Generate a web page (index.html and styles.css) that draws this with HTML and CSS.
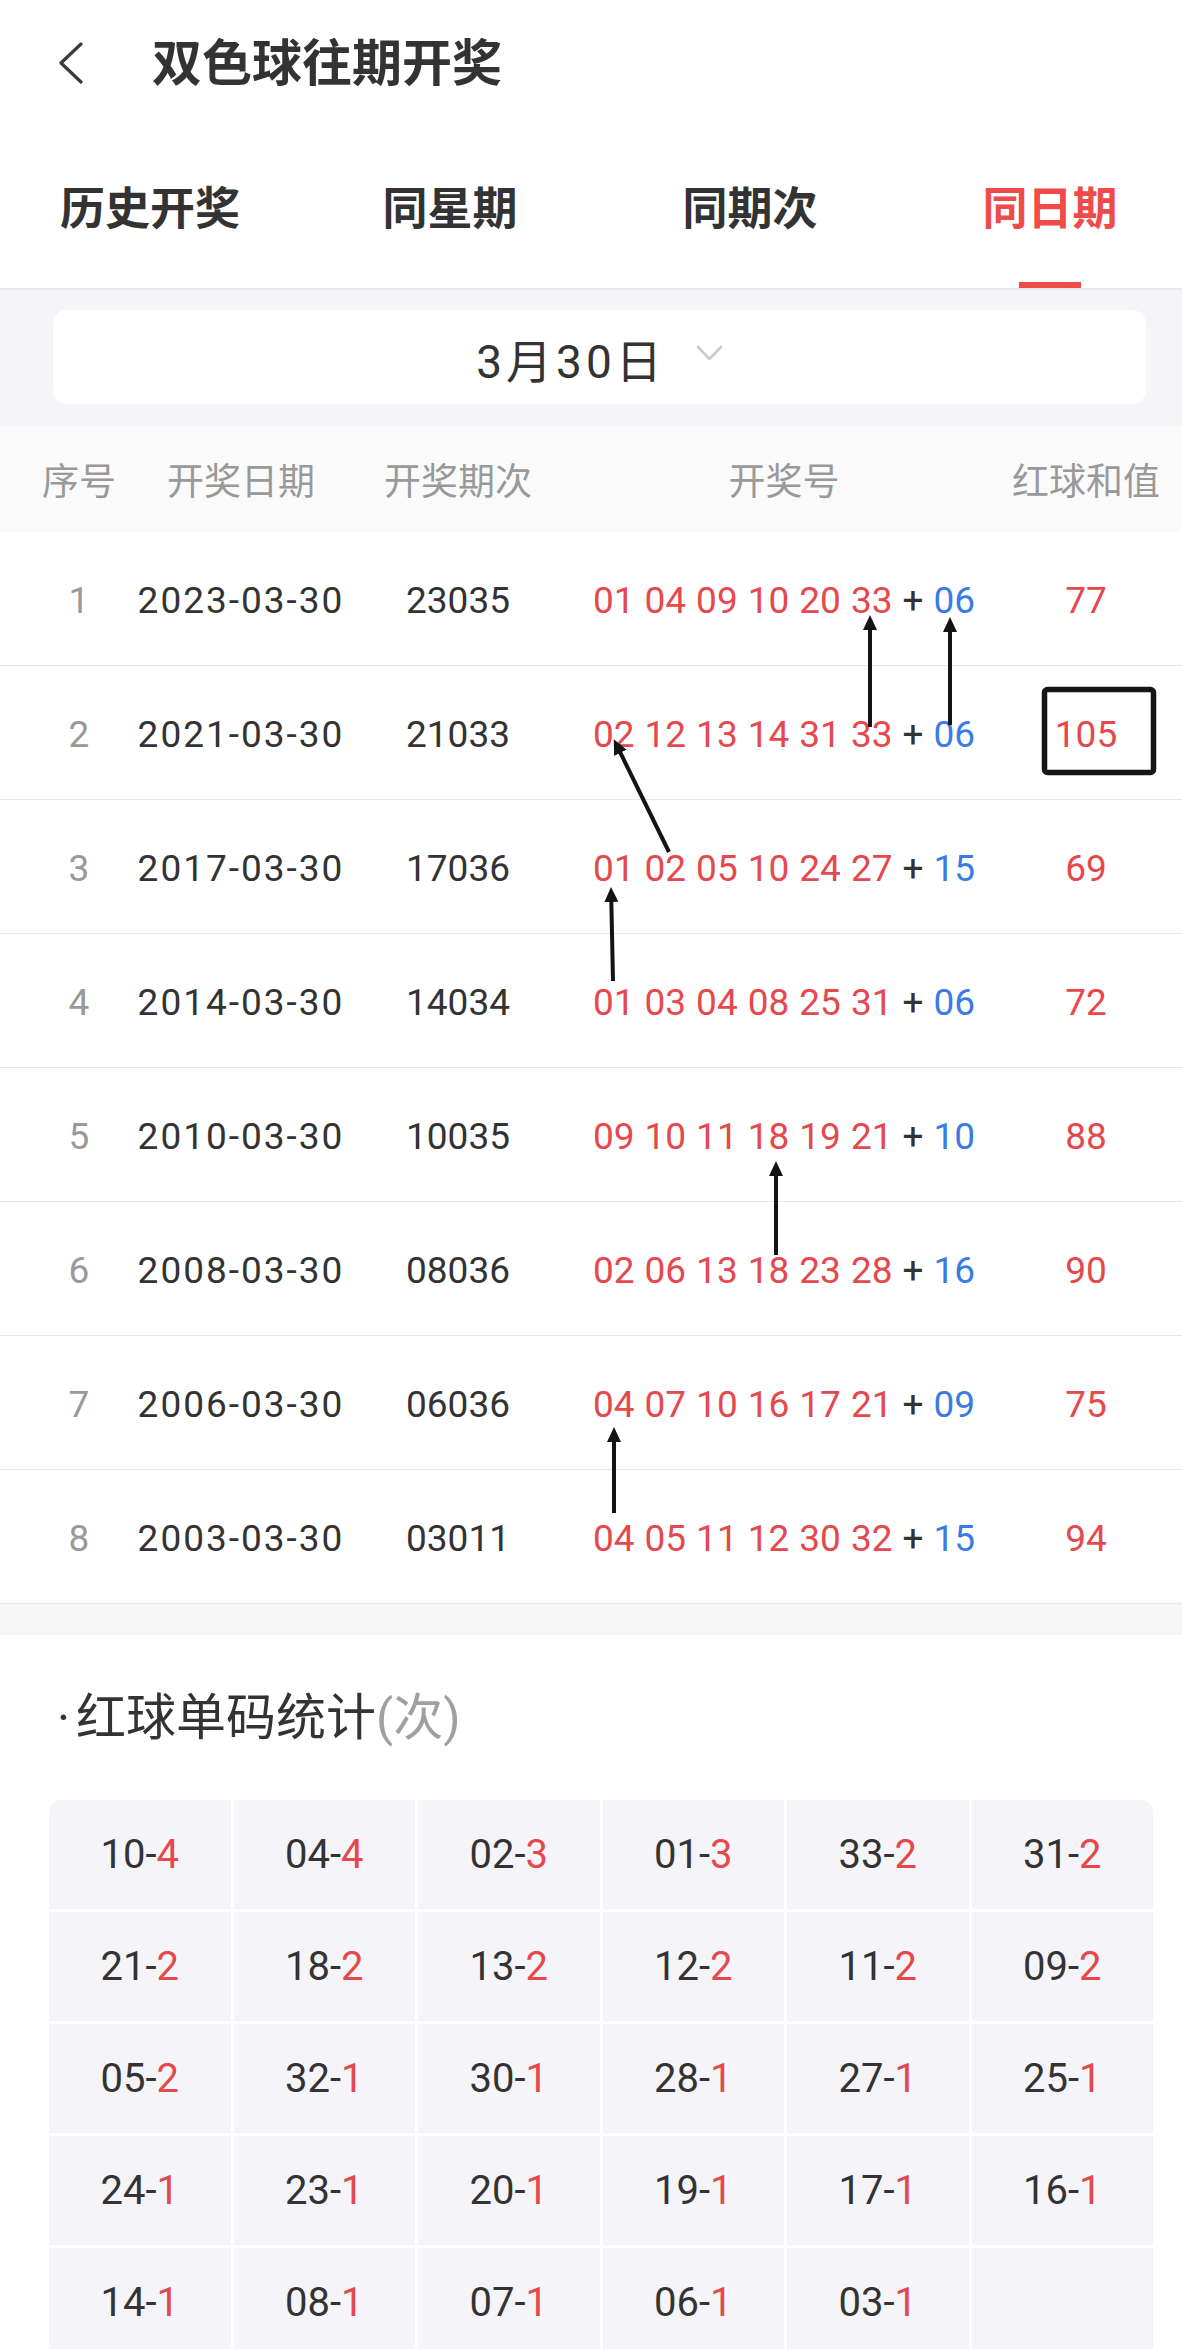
FILE: index.html
```
<!DOCTYPE html>
<html lang="zh-CN">
<head>
    <meta charset="UTF-8">
    <title>双色球往期开奖</title>
    <link rel="stylesheet" href="styles.css">
</head>
<body>
<div class="page">
    <div class="topbar">
        <svg class="back" width="26" height="42" viewBox="0 0 26 42">
            <polyline points="23,2 3,21 23,40" fill="none" stroke="#3a3a3a" stroke-width="3.2" stroke-linecap="round" stroke-linejoin="round"/>
        </svg>
        <h1 class="title">双色球往期开奖</h1>
    </div>

    <div class="tabs">
        <div class="tab">历史开奖</div>
        <div class="tab">同星期</div>
        <div class="tab">同期次</div>
        <div class="tab active">同日期</div>
    </div>

    <div class="picker-wrap">
        <div class="picker">
            <span class="picker-text">3月30日</span>
            <svg class="picker-arrow" width="27" height="17" viewBox="0 0 27 17">
                <polyline points="2,2 13.5,14 25,2" fill="none" stroke="#cacaca" stroke-width="2.6" stroke-linecap="round" stroke-linejoin="round"/>
            </svg>
        </div>
    </div>

    <div class="table">
        <div class="thead">
            <div class="c1">序号</div>
            <div class="c2">开奖日期</div>
            <div class="c3">开奖期次</div>
            <div class="c4">开奖号</div>
            <div class="c5">红球和值</div>
        </div>
        <div class="row">
            <div class="c1 idx">1</div>
            <div class="c2 date">2023-03-30</div>
            <div class="c3">23035</div>
            <div class="c4 balls"><span>01</span><span>04</span><span>09</span><span>10</span><span>20</span><span>33</span><i>+</i><b>06</b></div>
            <div class="c5 sum">77</div>
        </div>
        <div class="row">
            <div class="c1 idx">2</div>
            <div class="c2 date">2021-03-30</div>
            <div class="c3">21033</div>
            <div class="c4 balls"><span>02</span><span>12</span><span>13</span><span>14</span><span>31</span><span>33</span><i>+</i><b>06</b></div>
            <div class="c5 sum">105</div>
        </div>
        <div class="row">
            <div class="c1 idx">3</div>
            <div class="c2 date">2017-03-30</div>
            <div class="c3">17036</div>
            <div class="c4 balls"><span>01</span><span>02</span><span>05</span><span>10</span><span>24</span><span>27</span><i>+</i><b>15</b></div>
            <div class="c5 sum">69</div>
        </div>
        <div class="row">
            <div class="c1 idx">4</div>
            <div class="c2 date">2014-03-30</div>
            <div class="c3">14034</div>
            <div class="c4 balls"><span>01</span><span>03</span><span>04</span><span>08</span><span>25</span><span>31</span><i>+</i><b>06</b></div>
            <div class="c5 sum">72</div>
        </div>
        <div class="row">
            <div class="c1 idx">5</div>
            <div class="c2 date">2010-03-30</div>
            <div class="c3">10035</div>
            <div class="c4 balls"><span>09</span><span>10</span><span>11</span><span>18</span><span>19</span><span>21</span><i>+</i><b>10</b></div>
            <div class="c5 sum">88</div>
        </div>
        <div class="row">
            <div class="c1 idx">6</div>
            <div class="c2 date">2008-03-30</div>
            <div class="c3">08036</div>
            <div class="c4 balls"><span>02</span><span>06</span><span>13</span><span>18</span><span>23</span><span>28</span><i>+</i><b>16</b></div>
            <div class="c5 sum">90</div>
        </div>
        <div class="row">
            <div class="c1 idx">7</div>
            <div class="c2 date">2006-03-30</div>
            <div class="c3">06036</div>
            <div class="c4 balls"><span>04</span><span>07</span><span>10</span><span>16</span><span>17</span><span>21</span><i>+</i><b>09</b></div>
            <div class="c5 sum">75</div>
        </div>
        <div class="row">
            <div class="c1 idx">8</div>
            <div class="c2 date">2003-03-30</div>
            <div class="c3">03011</div>
            <div class="c4 balls"><span>04</span><span>05</span><span>11</span><span>12</span><span>30</span><span>32</span><i>+</i><b>15</b></div>
            <div class="c5 sum">94</div>
        </div>
    </div>

    <div class="gap"></div>

    <div class="stats">
        <h2 class="stats-title"><span class="dot">·</span>红球单码统计<span class="unit">(次)</span></h2>
        <div class="stat-grid">
            <div class="cell">10-<em>4</em></div>
            <div class="cell">04-<em>4</em></div>
            <div class="cell">02-<em>3</em></div>
            <div class="cell">01-<em>3</em></div>
            <div class="cell">33-<em>2</em></div>
            <div class="cell">31-<em>2</em></div>
            <div class="cell">21-<em>2</em></div>
            <div class="cell">18-<em>2</em></div>
            <div class="cell">13-<em>2</em></div>
            <div class="cell">12-<em>2</em></div>
            <div class="cell">11-<em>2</em></div>
            <div class="cell">09-<em>2</em></div>
            <div class="cell">05-<em>2</em></div>
            <div class="cell">32-<em>1</em></div>
            <div class="cell">30-<em>1</em></div>
            <div class="cell">28-<em>1</em></div>
            <div class="cell">27-<em>1</em></div>
            <div class="cell">25-<em>1</em></div>
            <div class="cell">24-<em>1</em></div>
            <div class="cell">23-<em>1</em></div>
            <div class="cell">20-<em>1</em></div>
            <div class="cell">19-<em>1</em></div>
            <div class="cell">17-<em>1</em></div>
            <div class="cell">16-<em>1</em></div>
            <div class="cell">14-<em>1</em></div>
            <div class="cell">08-<em>1</em></div>
            <div class="cell">07-<em>1</em></div>
            <div class="cell">06-<em>1</em></div>
            <div class="cell">03-<em>1</em></div>
            <div class="cell"></div>
        </div>
    </div>

    <!-- hand-drawn marks over the table -->
    <svg class="marks" width="1182" height="1700" viewBox="0 0 1182 1700">
        <defs>
            <marker id="head" markerUnits="userSpaceOnUse" markerWidth="16" markerHeight="16" refX="2" refY="8" orient="auto">
                <path d="M0,1 L15,8 L0,15 z" fill="#141414"/>
            </marker>
        </defs>
        <g stroke="#141414" stroke-width="4" fill="none" marker-end="url(#head)">
            <line x1="870" y1="727" x2="870" y2="628"/>
            <line x1="950" y1="725" x2="950" y2="630"/>
            <line x1="669" y1="852" x2="619.5" y2="751"/>
            <line x1="613" y1="981" x2="611.3" y2="900"/>
            <line x1="776" y1="1255" x2="776" y2="1174"/>
            <line x1="614" y1="1513" x2="614" y2="1440"/>
        </g>
        <rect x="1044.5" y="689.5" width="109" height="83" rx="3" fill="none" stroke="#161616" stroke-width="5.5"/>
    </svg>
</div>
</body>
</html>
```

FILE: styles.css
```
html, body{margin: 0;padding: 0}
body{
    background: #fff;
    color: #333;
    font-family: Roboto, "Noto Sans CJK SC", sans-serif;
}
.page{
    position: relative;
    width: 1182px;
    overflow: hidden;
}

/* top bar */
.topbar{
    height: 128px;
    display: flex;
    align-items: center;
    padding-left: 58px;
}
.back{display: block;margin-top: -2px}
.title{
    margin: 0 0 0 68px;
    font-size: 50px;
    font-weight: 700;
    color: #333;
    line-height: 60px;
}

/* tabs */
.tabs{
    display: flex;
    height: 160px;
    border-bottom: 2px solid #e9e9ec;
    overflow: hidden;
}
.tab{
    flex: 0 0 300px;
    text-align: center;
    padding-top: 52px;
    font-size: 45px;
    font-weight: 700;
    line-height: 60px;
    color: #333;
}
.tab.active{color: #f04b4b}
.tab.active::after{
    content: '';
    display: block;
    width: 62px;
    height: 6px;
    margin: 42px auto 0;
    background: #f04b4b;
}

/* date picker */
.picker-wrap{
    background: #f5f5f8;
    padding: 20px 36px 22px 53px;
}
.picker{
    height: 94px;
    background: #fff;
    border-radius: 14px;
    display: flex;
    align-items: center;
    justify-content: center;
    gap: 30px;
}
.picker-text{
    font-size: 46px;
    letter-spacing: 4px;
    color: #333;
    margin-top: 2px;
}
.picker-arrow{display: block;margin-top: -8px}

/* table */
.thead, .row{
    display: grid;
    grid-template-columns: 158px 166px 268px 384px 1fr;
}
.thead > div, .row > div{
    display: flex;
    justify-content: center;
    align-items: center;
    white-space: nowrap;
}
.thead{
    height: 106px;
    background: #fafafa;
    font-size: 37px;
    color: #999;
}
.row{
    height: 130px;
    padding-top: 3px;
    border-bottom: 1px solid #e6e6e6;
    font-size: 37px;
    color: #333;
}
.c5{padding-left: 14px}
.row .idx{color: #999}
.row .date{letter-spacing: 2px}
.balls{gap: 10px}
.balls span{color: #e5484d}
.balls i{font-style: normal;color: #333}
.balls b{font-weight: 400;color: #3b7be3}
.row .sum{color: #e5484d}

.gap{
    height: 31px;
    background: #f7f7f7;
}

/* red ball stats */
.stats{
    padding: 53px 0 60px 0;
}
.stats-title{
    margin: 0 0 52px 0;
    padding-left: 57px;
    font-size: 50px;
    font-weight: 400;
    line-height: 60px;
    color: #333;
}
.stats-title .dot{margin-right: 6px}
.stats-title .unit{color: #a0a0a0}
.stat-grid{
    margin-left: 49px;
    width: 1104px;
    display: grid;
    grid-template-columns: repeat(6, 1fr);
    gap: 3px;
    border-radius: 12px 12px 0 0;
    overflow: hidden;
}
.cell{
    height: 109px;
    background: #f5f5f9;
    display: flex;
    align-items: center;
    justify-content: center;
    font-size: 40px;
    color: #333;
}
.cell em{font-style: normal;color: #e5484d}

.marks{
    position: absolute;
    left: 0;
    top: 0;
    pointer-events: none;
}
```
